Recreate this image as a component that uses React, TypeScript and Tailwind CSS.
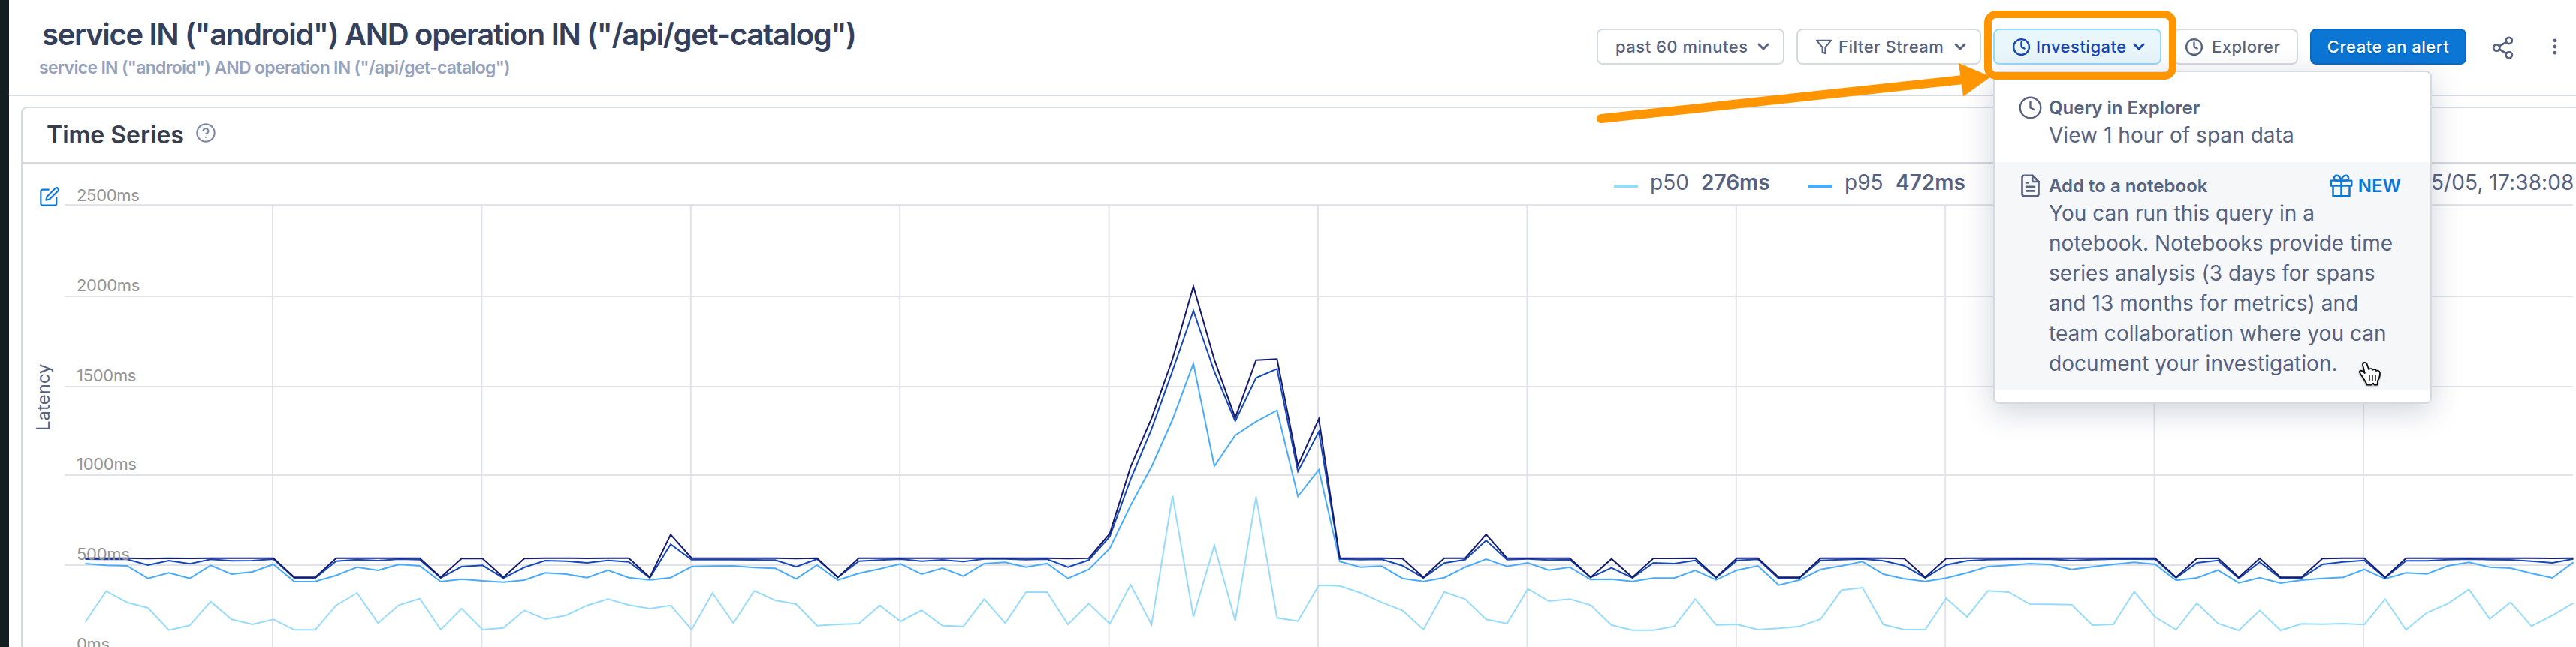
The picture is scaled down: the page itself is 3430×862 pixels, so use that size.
import {
    FiChevronDown,
    FiClock,
    FiEdit,
    FiFileText,
    FiFilter,
    FiGift,
    FiHelpCircle,
    FiMoreVertical,
    FiShare2,
} from 'react-icons/fi';
import type { ReactNode } from 'react';

// Latency samples, one every 30 seconds. Unit: 1/3 px below the plot's reference line.
const p50 = [
    567, 443, 488, 510, 599, 580, 485, 556, 576, 556, 598, 598, 500, 450, 571, 499, 473, 597, 513, 597,
    590, 520, 555, 540, 500, 475, 499, 513, 500, 597, 451, 571, 442, 480, 495, 581, 576, 573, 500, 564,
    520, 581, 584, 475, 571, 447, 447, 576, 493, 573, 418, 577, 61, 545, 260, 562, 65, 550, 563, 419,
    422, 450, 488, 520, 597, 446, 475, 556, 573, 434, 483, 475, 499, 579, 599, 599, 584, 475, 578, 576,
    597, 592, 584, 555, 439, 429, 577, 597, 597, 472, 546, 442, 447, 495, 496, 497, 579, 576, 445, 547,
    597, 491, 572, 600, 520, 600, 574, 575, 573, 577, 475, 598, 529, 493, 436, 554, 488, 583, 540, 491,
];

const p95 = [
    333, 340, 342, 392, 370, 392, 340, 375, 366, 336, 405, 404, 380, 347, 360, 336, 342, 405, 395, 402,
    407, 399, 370, 375, 389, 359, 389, 398, 389, 345, 343, 342, 349, 352, 394, 339, 399, 372, 354, 334,
    375, 351, 383, 333, 328, 347, 332, 392, 356, 272, 100, -55, -243, -467, -57, -180, -235, -280, 64, -43,
    325, 347, 343, 392, 404, 389, 347, 315, 344, 330, 359, 347, 397, 395, 404, 391, 391, 360, 398, 359,
    342, 419, 398, 356, 342, 325, 375, 394, 404, 391, 370, 345, 340, 333, 337, 356, 346, 336, 328, 336,
    400, 390, 359, 410, 389, 411, 399, 392, 388, 356, 394, 370, 374, 342, 328, 347, 351, 372, 390, 328,
];

const p99 = [
    315, 316, 316, 339, 321, 334, 316, 322, 321, 315, 391, 391, 323, 317, 321, 315, 317, 390, 345, 340,
    391, 348, 321, 323, 330, 320, 326, 390, 256, 317, 317, 317, 318, 319, 346, 315, 388, 323, 319, 315,
    323, 318, 325, 314, 314, 317, 315, 347, 319, 225, -5, -205, -438, -678, -435, -237, -410, -446, -36, -195,
    314, 317, 316, 341, 390, 331, 317, 240, 317, 314, 319, 317, 388, 350, 390, 330, 333, 320, 390, 320,
    316, 393, 390, 320, 317, 314, 322, 341, 390, 338, 322, 317, 316, 315, 316, 320, 317, 315, 315, 316,
    390, 330, 320, 392, 327, 392, 391, 336, 326, 320, 390, 322, 322, 317, 315, 317, 318, 323, 330, 314,
];

const p999 = [
    311, 311, 311, 313, 311, 312, 311, 311, 311, 311, 388, 388, 311, 311, 311, 311, 311, 388, 313, 313,
    388, 313, 311, 311, 312, 311, 311, 388, 217, 311, 311, 311, 311, 311, 313, 311, 388, 311, 311, 311,
    311, 311, 311, 311, 311, 311, 311, 313, 311, 213, -55, -248, -485, -775, -483, -250, -481, -485, -60, -246,
    311, 311, 311, 313, 388, 311, 311, 216, 311, 311, 311, 311, 388, 314, 388, 312, 312, 311, 388, 311,
    311, 388, 388, 311, 311, 311, 311, 313, 388, 313, 311, 311, 311, 311, 311, 311, 311, 311, 311, 311,
    388, 312, 311, 388, 312, 388, 388, 313, 311, 311, 388, 311, 311, 311, 311, 311, 311, 311, 312, 311,
];

const series = [
    { name: 'p50', color: '#97dbfb', data: p50 },
    { name: 'p95', color: '#49abfb', data: p95 },
    { name: 'p99', color: '#1549b9', data: p99 },
    { name: 'p99.9', color: '#161c6d', data: p999 },
];

const ticks = [
    { label: '2500ms', y: 55, labelY: 49.5 },
    { label: '2000ms', y: 177, labelY: 169.5 },
    { label: '1500ms', y: 297, labelY: 289.5 },
    { label: '1000ms', y: 415, labelY: 407.5 },
    { label: '500ms', y: 535, labelY: 528 },
    { label: '0ms', y: 655, labelY: 648 },
];

function toPoints(data: number[]) {
    return data.map((v, i) => `${(83.5 + i * 27.84).toFixed(1)},${(422 + v / 3).toFixed(1)}`).join(' ');
}

function LatencyChart() {
    return (
        <svg className="block h-[644px] w-[3400px]" viewBox="0 0 3400 644">
            <g stroke="#e1e3e8" strokeWidth="2">
                {ticks.map((t) => (
                    <line key={t.label} x1="56" x2="3396" y1={t.y} y2={t.y} />
                ))}
                {Array.from({ length: 11 }, (_, i) => (
                    <line key={i} x1={333 + i * 278.4} x2={333 + i * 278.4} y1="55" y2="644" />
                ))}
            </g>
            <g fill="none" strokeWidth="2">
                {series.map((s) => (
                    <polyline key={s.name} stroke={s.color} points={toPoints(s.data)} />
                ))}
            </g>
            <g fill="#949494" fontFamily="Inter, sans-serif" fontSize="22" letterSpacing="-0.3">
                {ticks.map((t) => (
                    <text key={t.label} x="72" y={t.labelY}>
                        {t.label}
                    </text>
                ))}
            </g>
            <text
                transform="translate(36 356) rotate(-90)"
                fill="#56627f"
                fontFamily="Inter, sans-serif"
                fontSize="24"
            >
                Latency
            </text>
        </svg>
    );
}

function LegendItem({ swatch, name, value }: { swatch: string; name: string; value: string }) {
    return (
        <div className="flex items-center">
            <span className={`mt-[9px] mr-4 h-1 w-8 ${swatch}`} />
            <span className="mr-[17px] w-[51px]">{name}</span>
            <span className="w-[92px] font-semibold">{value}</span>
        </div>
    );
}

function ToolbarButton({ className, children }: { className: string; children: ReactNode }) {
    return (
        <button
            className={`flex h-12 shrink-0 items-center rounded-lg border-2 text-[22px] font-[450] tracking-[0.5px] whitespace-nowrap ${className}`}
        >
            {children}
        </button>
    );
}

function InvestigateMenu() {
    return (
        <div className="absolute top-[56px] left-0 z-10 h-[444px] w-[584px] rounded-lg border-2 border-[#d5dae1] bg-white text-[#56627f] shadow-[0_10px_40px_rgba(40,55,90,0.22)]">
            <div className="flex h-[120px] pt-[31px] pl-[31px]">
                <FiClock className="h-[33px] w-[33px]" strokeWidth={1.7} />
                <div className="mt-0.5 ml-2">
                    <div className="text-[24px] leading-[30px] font-semibold">Query in Explorer</div>
                    <div className="mt-px text-[28px] leading-10 tracking-[0.05px]">View 1 hour of span data</div>
                </div>
            </div>
            <div className="h-[304px] bg-[#f5f7f9] pt-[15px] pl-[31px]">
                <div className="flex h-[33px] items-center">
                    <FiFileText className="h-[33px] w-[33px]" strokeWidth={1.9} />
                    <span className="ml-2 text-[24px] leading-[30px] font-semibold">Add to a notebook</span>
                    <span className="mr-[39px] ml-auto flex items-center gap-1.5 text-[24px] font-semibold text-[#0c76d5]">
                        <FiGift className="h-[33px] w-[33px]" strokeWidth={1.8} />
                        NEW
                    </span>
                </div>
                <p className="ml-[41px] text-[28px] leading-10 tracking-[0.05px] whitespace-nowrap">
                    You can run this query in a<br />
                    notebook. Notebooks provide time
                    <br />
                    series analysis (3 days for spans
                    <br />
                    and 13 months for metrics) and
                    <br />
                    team collaboration where you can
                    <br />
                    document your investigation.
                </p>
            </div>
        </div>
    );
}

function HandCursor() {
    return (
        <svg
            className="absolute top-[480px] left-[3138px] z-20 h-9 w-9 drop-shadow-[0_1px_1px_rgba(0,0,0,0.35)]"
            viewBox="0 0 36 36"
        >
            <path
                d="M8 6c0-4 5-4 6 0l2 6c2-1.500 4.500-1 5 .8 2-1.500 5-.8 5 1.200 2.500-1 5 .3 5 3.500 0 4.500-1.500 7.500-3 9.500l-.5 5.500h-4l-1.500-1.800-2.500 1.800h-6c-.8-3.500-3-5.500-4.500-8.500-1.500-3-4-5-5-8-.7-2 2-3 3.800-1.500l3 2.500z"
                fill="#fff"
                stroke="#111"
                strokeWidth="1.8"
                strokeLinejoin="round"
            />
            <path d="M17 20v8M21 20v8M25 20v8" stroke="#111" strokeWidth="1.5" fill="none" />
        </svg>
    );
}

function CalloutArrow() {
    return (
        <svg className="absolute top-0 left-[2110px] z-30 h-[180px] w-[560px]" viewBox="0 0 560 180">
            <path d="M22 158L504 106" stroke="#ff9500" strokeWidth="12" strokeLinecap="round" />
            <path d="M498 84l43 18-37 26.500z" fill="#ff9500" />
        </svg>
    );
}

export default function App() {
    return (
        <div className="relative flex h-[862px] w-[3430px] overflow-hidden bg-white font-['Inter',sans-serif]">
            <aside className="w-3 shrink-0 bg-[#141e20]" />
            <main className="flex min-w-0 flex-1 flex-col">
                <header className="flex h-32 shrink-0 justify-between border-b-2 border-[#d5dae1]">
                    <div className="pt-6 whitespace-nowrap">
                        <h1 className="ml-[44px] text-[40px] leading-[44px] font-semibold tracking-[-1.33px] text-[#343f5c]">
                            service IN ("android") AND operation IN ("/api/get-catalog")
                        </h1>
                        <p className="ml-10 text-[23px] leading-[44px] font-semibold tracking-[-0.7px] text-[#96a2bb]">
                            service IN ("android") AND operation IN ("/api/get-catalog")
                        </p>
                    </div>
                    <div className="flex gap-4 pt-[38px] text-[#56627f]">
                        <ToolbarButton className="w-[250px] border-[#d5dae1] pl-[23px]">
                            past 60 minutes
                            <FiChevronDown className="mr-3.5 ml-auto h-6 w-6" strokeWidth={3} />
                        </ToolbarButton>
                        <ToolbarButton className="w-[246px] border-[#d5dae1] pl-[23px]">
                            <FiFilter className="mr-2 h-[23px] w-[23px]" strokeWidth={2.2} />
                            Filter Stream
                            <FiChevronDown className="mr-3.5 ml-auto h-6 w-6" strokeWidth={3} />
                        </ToolbarButton>
                        <div className="relative">
                            <ToolbarButton className="w-[224px] border-[#93dbf8] bg-[#e9f6fc] pl-[23px] text-[#1446b8]">
                                <FiClock className="mr-[7px] h-[25px] w-[25px]" strokeWidth={2.2} />
                                Investigate
                                <FiChevronDown className="mr-4 ml-auto h-6 w-6" strokeWidth={3} />
                            </ToolbarButton>
                            <InvestigateMenu />
                            <div className="absolute -top-6 -left-3 z-20 h-[92px] w-[256px] rounded-2xl border-[10px] border-[#ff9500]" />
                        </div>
                        <ToolbarButton className="w-[166px] border-[#d5dae1] pl-[13px]">
                            <FiClock className="mr-[11px] h-[25px] w-[25px]" strokeWidth={2.2} />
                            Explorer
                        </ToolbarButton>
                        <ToolbarButton className="w-[208px] justify-center border-[#0d68be] bg-[#0c76d5] text-white [text-shadow:0_2px_2px_rgba(0,0,0,0.25)]">
                            Create an alert
                        </ToolbarButton>
                        <div className="flex h-12 w-[130px] items-center">
                            <FiShare2 className="mt-0.5 ml-4 h-[33px] w-[33px]" />
                            <FiMoreVertical className="ml-[39px] h-7 w-7" strokeWidth={2.2} />
                        </div>
                    </div>
                </header>
                <section className="mt-3.5 ml-4 flex-1 rounded-tl-lg border-t-2 border-l-2 border-[#d5dae1]">
                    <div className="flex h-[74px] items-center border-b-2 border-[#d5dae1] pl-8">
                        <h2 className="text-[32px] font-semibold text-[#383e4c]">Time Series</h2>
                        <FiHelpCircle className="mb-1.5 ml-[15px] h-7 w-7 text-[#7c89a5]" strokeWidth={1.8} />
                    </div>
                    <div className="relative">
                        <LatencyChart />
                        <FiEdit
                            className="absolute top-[30px] left-[22px] h-[28px] w-[28px] text-[#0c76d5]"
                            strokeWidth={1.8}
                        />
                        <div className="absolute top-[4px] left-0 flex h-[42px] items-center text-[28px] whitespace-nowrap text-[#56627f]">
                            <div className="ml-[2119px] flex gap-[51px]">
                                <LegendItem swatch="bg-[#97dbfb]" name="p50" value="276ms" />
                                <LegendItem swatch="bg-[#49abfb]" name="p95" value="472ms" />
                            </div>
                            <span className="ml-[621px] tracking-[0.1px]">5/05, 17:38:08</span>
                        </div>
                    </div>
                </section>
            </main>
            <CalloutArrow />
            <HandCursor />
        </div>
    );
}
